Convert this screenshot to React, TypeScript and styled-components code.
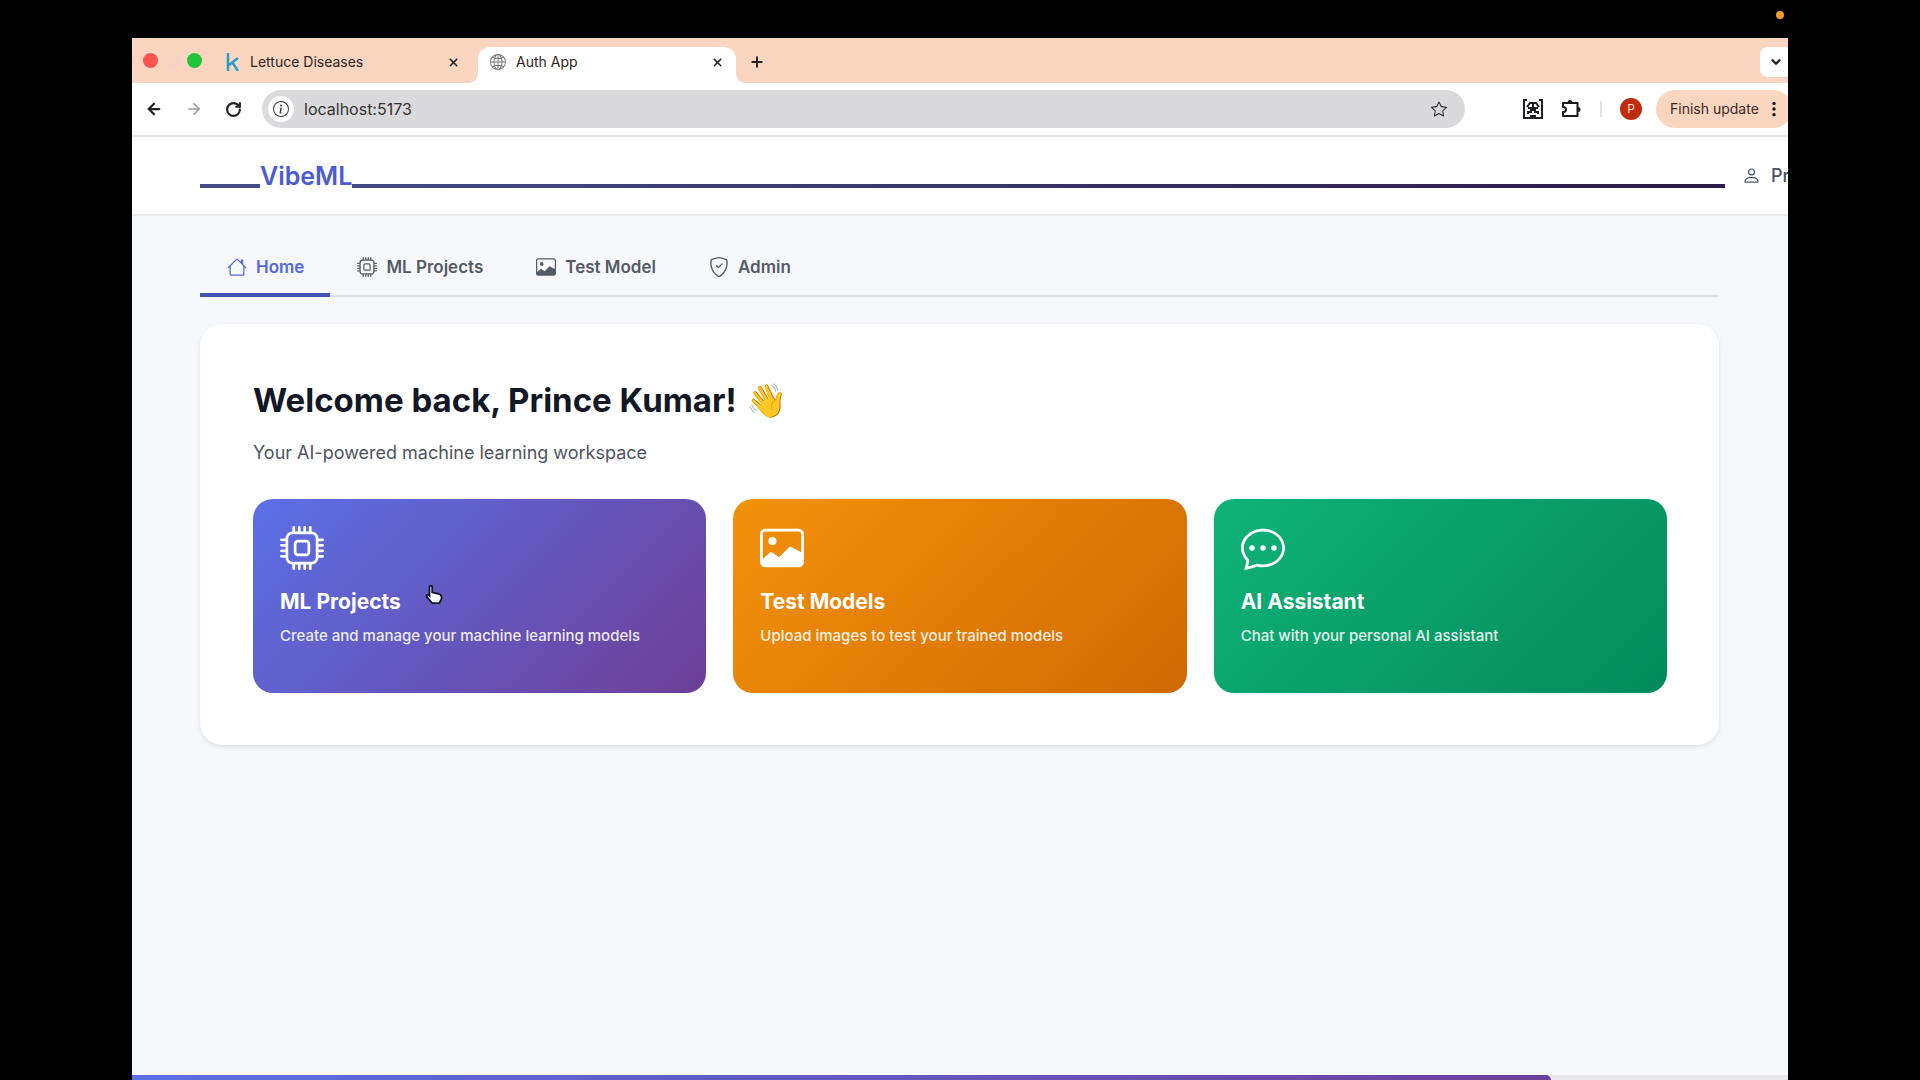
import React from 'react';
import styled, { createGlobalStyle } from 'styled-components';
import { BsCpu, BsImage, BsChatDots, BsHouse, BsShieldCheck, BsPerson, BsInfoCircle, BsGlobe2, BsStar, BsThreeDotsVertical } from 'react-icons/bs';
import { ArrowLeft, ArrowRight, RotateCw, X, Plus, ChevronDown } from 'lucide-react';

const Global = createGlobalStyle`
  * { box-sizing: border-box; }
  html, body, #root { height: 100%; }
  body { margin: 0; background: #000; font-family: Inter, "Liberation Sans", sans-serif; overflow: hidden; }
  button, input { font: inherit; color: inherit; border: 0; background: none; padding: 0; margin: 0; }
  h1, h2, p { margin: 0; }
  svg { display: block; flex: none; }
  a { color: inherit; text-decoration: none; }
`;

const Desktop = styled.div`
  height: 100%;
  display: flex;
  flex-direction: column;
  padding: 0 132px;
  background: #000;
`;
const MenuBar = styled.div`
  height: 38px;
  flex: none;
  display: flex;
  align-items: center;
  justify-content: flex-end;
  padding: 0 4px 8px 0;
`;
const RecordingDot = styled.span`
  width: 8px;
  height: 8px;
  border-radius: 50%;
  background: #f39a2e;
`;
const Window = styled.div`
  flex: 1;
  min-height: 0;
  display: flex;
  flex-direction: column;
  overflow: hidden;
  background: #f6f8fb;
`;

const TabStrip = styled.div`
  height: 45px;
  flex: none;
  display: flex;
  align-items: flex-end;
  background: #fad6c1;
`;
const Lights = styled.div`
  height: 45px;
  width: 82px;
  display: flex;
  align-items: center;
  gap: 7px;
  padding-left: 11px;
`;
const Light = styled.span<{ $color: string }>`
  width: 15px;
  height: 15px;
  border-radius: 50%;
  background: ${p => p.$color};
`;
const BrowserTab = styled.div<{ $active?: boolean }>`
  position: relative;
  height: 36px;
  width: 258px;
  display: flex;
  align-items: center;
  gap: 10px;
  padding: 0 12px 6px;
  background: ${p => (p.$active ? '#fff' : 'transparent')};
  border-radius: 12px 12px 0 0;
  font-size: 14px;
  line-height: 20px;
  color: #2b2523;
  &::before, &::after {
    content: '';
    display: ${p => (p.$active ? 'block' : 'none')};
    position: absolute;
    bottom: 0;
    width: 10px;
    height: 10px;
  }
  &::before { left: -10px; background: radial-gradient(circle at 0 0, transparent 10px, #fff 10px); }
  &::after { right: -10px; background: radial-gradient(circle at 100% 0, transparent 10px, #fff 10px); }
`;
const Tabs = styled.div`
  display: flex;
  gap: 6px;
`;
const TabTitle = styled.span`
  flex: 1;
`;
const IconButton = styled.button<{ $color?: string }>`
  display: flex;
  align-items: center;
  justify-content: center;
  color: ${p => p.$color || '#222'};
`;
const NewTab = styled(IconButton)`
  height: 36px;
  width: 42px;
  padding-bottom: 6px;
`;
const TabSearch = styled(IconButton)`
  height: 30px;
  width: 32px;
  margin: 0 -4px 6px auto;
  border-radius: 8px;
  background: #fff;
`;

const Toolbar = styled.div`
  height: 54px;
  flex: none;
  display: flex;
  align-items: center;
  background: #fff;
  border-bottom: 2px solid #e4e5e7;
`;
const NavButtons = styled.div`
  width: 130px;
  display: flex;
  gap: 22px;
  padding-left: 13px;
`;
const AddressBar = styled.label`
  flex: 1;
  height: 38px;
  display: flex;
  align-items: center;
  gap: 10px;
  padding: 0 18px 0 6px;
  border-radius: 19px;
  background: #dadadd;
  color: #333;
`;
const SiteInfo = styled.span`
  width: 26px;
  height: 26px;
  display: flex;
  align-items: center;
  justify-content: center;
  border-radius: 50%;
  background: #fff;
`;
const Address = styled.input`
  flex: 1;
  outline: 0;
  font-size: 16px;
  line-height: 20px;
`;
const Extensions = styled.div`
  flex: none;
  display: flex;
  align-items: center;
  margin-left: 58px;
  gap: 18px;
`;
const Divider = styled.span`
  width: 2px;
  height: 16px;
  background: #e6e3e2;
`;
const Avatar = styled.button`
  width: 22px;
  height: 22px;
  border-radius: 50%;
  background: #bd2d0d;
  color: #fbd9cf;
  font-size: 12px;
  line-height: 22px;
`;
const UpdateButton = styled.button`
  flex: none;
  height: 38px;
  width: 136px;
  margin: 0 -4px 0 14px;
  display: flex;
  align-items: center;
  gap: 6px;
  padding: 0 0 0 14px;
  border-radius: 19px;
  background: #fad6c1;
  color: #3a2a22;
  font-size: 14px;
  line-height: 20px;
  white-space: nowrap;
`;

const Page = styled.div`
  flex: 1;
  min-height: 0;
  display: flex;
  flex-direction: column;
`;
const Header = styled.header`
  flex: none;
  height: 79px;
  display: flex;
  align-items: center;
  padding-left: 68px;
  background: #fff;
  border-bottom: 2px solid #e8e9eb;
  overflow: hidden;
`;
const Brand = styled.a`
  flex: 1;
  display: flex;
  align-items: flex-end;
  color: #4b5bd3;
  font-size: 25px;
  line-height: 32px;
  font-weight: 600;
`;
const Rule = styled.span<{ $lead?: boolean }>`
  flex: ${p => (p.$lead ? '0 0 60px' : '1')};
  height: 4px;
  margin-bottom: 4px;
  background: ${p => (p.$lead ? '#434a86' : 'linear-gradient(90deg, #434a86, #2c1a47)')};
`;
const User = styled.a`
  width: 63px;
  flex: none;
  display: flex;
  align-items: center;
  gap: 10px;
  padding-left: 17px;
  color: #4b5262;
  font-size: 18px;
  line-height: 24px;
  font-weight: 500;
  white-space: nowrap;
`;
const Main = styled.main`
  flex: 1;
  padding: 20px 69px 0 68px;
`;
const Nav = styled.nav`
  display: flex;
  height: 61px;
  border-bottom: 2px solid #dfe1e5;
`;
const NavLink = styled.a<{ $active?: boolean }>`
  display: flex;
  align-items: center;
  gap: 9px;
  height: 61px;
  padding: 4px 26px 0 27px;
  border-bottom: 4px solid ${p => (p.$active ? '#4254b5' : 'transparent')};
  color: ${p => (p.$active ? '#5468e0' : '#555b66')};
  font-size: 17px;
  line-height: 24px;
  font-weight: 600;
`;
const Panel = styled.section`
  margin-top: 27px;
  padding: 54px 52px 52px 53px;
  border-radius: 22px;
  background: #fff;
  box-shadow: 0 2px 4px rgba(20, 30, 50, 0.1);
`;
const Welcome = styled.h1`
  display: flex;
  align-items: center;
  gap: 9px;
  color: #121826;
  font-size: 33px;
  line-height: 44px;
  font-weight: 700;
`;
const Lead = styled.p`
  margin-top: 17px;
  color: #4e5563;
  font-size: 18px;
  line-height: 28px;
`;
const Cards = styled.div`
  display: grid;
  grid-template-columns: repeat(3, 1fr);
  gap: 27px;
  margin-top: 32px;
`;
const Card = styled.a<{ $from: string; $to: string }>`
  position: relative;
  height: 194px;
  padding: 27px;
  border-radius: 20px;
  background: linear-gradient(135deg, ${p => p.$from}, ${p => p.$to});
  color: #fff;
`;
const CardTitle = styled.h2`
  margin-top: 18px;
  font-size: 21px;
  line-height: 28px;
  font-weight: 700;
`;
const CardText = styled.p`
  margin-top: 8px;
  font-size: 15px;
  line-height: 24px;
  font-weight: 500;
  opacity: 0.88;
`;
const Pointer = styled.svg`
  position: absolute;
  left: 172px;
  top: 86px;
`;
const Track = styled.div`
  flex: none;
  height: 5px;
  background: #e8e8eb;
`;
const Progress = styled.div`
  width: 85.7%;
  height: 5px;
  border-radius: 0 5px 0 0;
  background: linear-gradient(90deg, #5c70e4, #6b419b);
`;

const QrIcon = () => (
  <svg width="20" height="20" viewBox="0 0 20 20" fill="none" stroke="#1d1d2b" strokeWidth="2">
    <path d="M1 5V1h3M16 1h3v4M1 4v15h18V4" />
    <path d="M4 8l3-4h6l3 4M5 9h10M5 15v-2h3v-2h4v2h3v2M7 17h6M10 4v4" />
  </svg>
);
const PuzzleIcon = () => (
  <svg width="21" height="20" viewBox="0 0 21 20" fill="none" stroke="#1c1c1c" strokeWidth="2" strokeLinejoin="round">
    <path d="M2 4h14.500v13H2v-4c4 0 4-5 0-5z" />
    <path d="M6.500 3.500a2.500 2.500 0 0 1 5 0zM17 8a2.500 2.500 0 0 1 0 5z" fill="#1c1c1c" stroke="none" />
  </svg>
);

const cards = [
  { Icon: BsCpu, title: 'ML Projects', text: 'Create and manage your machine learning models', from: '#5b70e6', to: '#6d3f96' },
  { Icon: BsImage, title: 'Test Models', text: 'Upload images to test your trained models', from: '#f3920b', to: '#d06903' },
  { Icon: BsChatDots, title: 'AI Assistant', text: 'Chat with your personal AI assistant', from: '#0fb377', to: '#048a5c' },
];
const links = [
  { Icon: BsHouse, label: 'Home' },
  { Icon: BsCpu, label: 'ML Projects' },
  { Icon: BsImage, label: 'Test Model' },
  { Icon: BsShieldCheck, label: 'Admin' },
];

export default function App() {
  return (
    <Desktop>
      <Global />
      <MenuBar><RecordingDot /></MenuBar>
      <Window>
        <TabStrip>
          <Lights>
            <Light $color="#fb5350" />
            <Light $color="#fbd3c6" />
            <Light $color="#20c43b" />
          </Lights>
          <Tabs>
            <BrowserTab>
              <svg width="14" height="18" viewBox="0 0 14 18" fill="none" stroke="#2a9cc4" strokeWidth="2.5">
                <path d="M2 0v18M12 5l-9 7M6 9l6 9" />
              </svg>
              <TabTitle>Lettuce Diseases</TabTitle>
              <IconButton aria-label="Close Lettuce Diseases"><X size={13} strokeWidth={3} /></IconButton>
            </BrowserTab>
            <BrowserTab $active>
              <BsGlobe2 size={16} color="#777" />
              <TabTitle>Auth App</TabTitle>
              <IconButton aria-label="Close Auth App"><X size={13} strokeWidth={3} /></IconButton>
            </BrowserTab>
          </Tabs>
          <NewTab aria-label="New tab"><Plus size={16} strokeWidth={3} /></NewTab>
          <TabSearch aria-label="Search tabs"><ChevronDown size={14} strokeWidth={4} /></TabSearch>
        </TabStrip>
        <Toolbar>
          <NavButtons>
            <IconButton aria-label="Back"><ArrowLeft size={18} strokeWidth={3} /></IconButton>
            <IconButton aria-label="Forward" $color="#999"><ArrowRight size={18} strokeWidth={2} /></IconButton>
            <IconButton aria-label="Reload"><RotateCw size={17} strokeWidth={3} /></IconButton>
          </NavButtons>
          <AddressBar>
            <SiteInfo><BsInfoCircle size={16} /></SiteInfo>
            <Address aria-label="Address" defaultValue="localhost:5173" />
            <BsStar size={16} />
          </AddressBar>
          <Extensions>
            <IconButton aria-label="Extension"><QrIcon /></IconButton>
            <IconButton aria-label="Extensions"><PuzzleIcon /></IconButton>
            <Divider />
            <Avatar>P</Avatar>
          </Extensions>
          <UpdateButton>Finish update <BsThreeDotsVertical size={18} color="#111" /></UpdateButton>
        </Toolbar>
        <Page>
          <Header>
            <Brand href="#"><Rule $lead />VibeML<Rule /></Brand>
            <User href="#profile"><BsPerson size={19} />Pr</User>
          </Header>
          <Main>
            <Nav>
              {links.map(({ Icon, label }, i) => (
                <NavLink key={label} href="#" $active={i === 0}><Icon size={20} />{label}</NavLink>
              ))}
            </Nav>
            <Panel>
              <Welcome>Welcome back, Prince Kumar! <span>👋</span></Welcome>
              <Lead>Your AI-powered machine learning workspace</Lead>
              <Cards>
                {cards.map(({ Icon, title, text, from, to }, i) => (
                  <Card key={title} href="#" $from={from} $to={to}>
                    <Icon size={44} />
                    <CardTitle>{title}</CardTitle>
                    <CardText>{text}</CardText>
                    {i === 0 && (
                      <Pointer width="18" height="20" viewBox="0 0 20 22">
                        <path d="M5 2c0-2 3-2 3 0v6l8 2c2 1 3 3 2 6l-2 4H8l-6-7c-1-2 1-3 3-1z" fill="#fff" stroke="#15152b" strokeWidth="2" />
                      </Pointer>
                    )}
                  </Card>
                ))}
              </Cards>
            </Panel>
          </Main>
          <Track><Progress /></Track>
        </Page>
      </Window>
    </Desktop>
  );
}
